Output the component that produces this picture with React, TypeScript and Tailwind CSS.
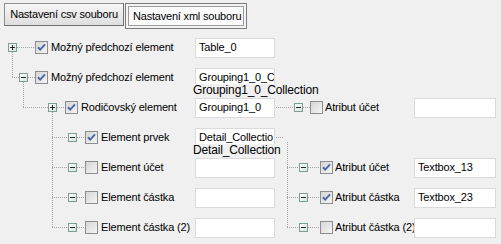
import React from "react";

const FONT = { fontFamily: '"Liberation Sans", Arial, sans-serif' };

function Expander({ open }: { open: boolean }) {
  return (
    <svg width="9" height="9" viewBox="0 0 9 9" className="block shrink-0">
      <defs>
        <linearGradient id="exg" x1="0" y1="0" x2="1" y2="1">
          <stop offset="0" stopColor="#ffffff" />
          <stop offset="1" stopColor="#d6dfdc" />
        </linearGradient>
      </defs>
      <rect x="0.5" y="0.5" width="8" height="8" fill="url(#exg)" stroke="#7a9d94" />
      <line x1="2" y1="4.5" x2="7" y2="4.5" stroke="#1f2a28" />
      {!open && <line x1="4.5" y1="2" x2="4.5" y2="7" stroke="#1f2a28" />}
    </svg>
  );
}

function Check({ checked }: { checked: boolean }) {
  return (
    <svg width="13" height="13" viewBox="0 0 13 13" className="block shrink-0">
      <defs>
        <linearGradient id="cbg" x1="0" y1="0" x2="1" y2="1">
          <stop offset="0" stopColor="#d4d4d4" />
          <stop offset="1" stopColor="#f6f6f6" />
        </linearGradient>
      </defs>
      <rect x="0.5" y="0.5" width="12" height="12" fill="url(#cbg)" stroke="#8c8d8e" />
      {checked && (
        <path d="M3 6.2 L5.2 8.6 L10 3.4" fill="none" stroke="#4a68a8" strokeWidth="2" />
      )}
    </svg>
  );
}

type NodeProps = {
  open: boolean;
  checked: boolean;
  label: string;
  boxMl: string;
  cbMl: string;
  lblMl: string;
};

function Node({ open, checked, label, boxMl, cbMl, lblMl }: NodeProps) {
  return (
    <div className="flex items-start h-[30px]">
      <div className={`${boxMl} mt-[10px]`}>
        <Expander open={open} />
      </div>
      <div className={`${cbMl} mt-[8px]`}>
        <Check checked={checked} />
      </div>
      <span
        className={`${lblMl} mt-[8px] text-[11px] leading-[13px] tracking-[-0.15px] text-black whitespace-nowrap`}
      >
        {label}
      </span>
    </div>
  );
}

function TextBox({ value, w }: { value?: string; w: string }) {
  return (
    <div
      className={`${w} h-[20px] mt-[5px] bg-white border border-[#dadada] text-[11px] leading-[16px] tracking-[-0.15px] pl-[3px] overflow-hidden whitespace-nowrap text-black`}
    >
      {value}
    </div>
  );
}

type Row = {
  left: NodeProps;
  text?: string;
  right?: NodeProps;
  rtext?: string;
};

const rows: Row[] = [
  { left: { open: false, checked: true, label: "Možný předchozí element", boxMl: "ml-[8px]", cbMl: "ml-[18px]", lblMl: "ml-[3px]" }, text: "Table_0" },
  { left: { open: true, checked: true, label: "Možný předchozí element", boxMl: "ml-[19px]", cbMl: "ml-[7px]", lblMl: "ml-[3px]" }, text: "Grouping1_0_C" },
  {
    left: { open: false, checked: true, label: "Rodičovský element", boxMl: "ml-[48px]", cbMl: "ml-[8px]", lblMl: "ml-[3px]" },
    text: "Grouping1_0",
    right: { open: true, checked: false, label: "Atribut účet", boxMl: "ml-[19px]", cbMl: "ml-[7px]", lblMl: "ml-[2px]" },
    rtext: "",
  },
  { left: { open: true, checked: true, label: "Element prvek", boxMl: "ml-[68px]", cbMl: "ml-[8px]", lblMl: "ml-[3px]" }, text: "Detail_Collectio" },
  {
    left: { open: true, checked: false, label: "Element účet", boxMl: "ml-[68px]", cbMl: "ml-[8px]", lblMl: "ml-[3px]" },
    text: "",
    right: { open: true, checked: true, label: "Atribut účet", boxMl: "ml-[24px]", cbMl: "ml-[12px]", lblMl: "ml-[2px]" },
    rtext: "Textbox_13",
  },
  {
    left: { open: true, checked: false, label: "Element částka", boxMl: "ml-[68px]", cbMl: "ml-[8px]", lblMl: "ml-[3px]" },
    text: "",
    right: { open: true, checked: true, label: "Atribut částka", boxMl: "ml-[24px]", cbMl: "ml-[12px]", lblMl: "ml-[2px]" },
    rtext: "Textbox_23",
  },
  {
    left: { open: true, checked: false, label: "Element částka (2)", boxMl: "ml-[68px]", cbMl: "ml-[8px]", lblMl: "ml-[3px]" },
    text: "",
    right: { open: true, checked: false, label: "Atribut částka (2)", boxMl: "ml-[24px]", cbMl: "ml-[12px]", lblMl: "ml-[2px]" },
    rtext: "",
  },
];

function Lines() {
  const d = "1 1";
  const c = "#a3a3a3";
  const L = (x1: number, y1: number, x2: number, y2: number, k: string) => (
    <line key={k} x1={x1} y1={y1} x2={x2} y2={y2} stroke={c} strokeDasharray={d} />
  );
  const items: React.ReactNode[] = [];
  // left tree
  items.push(L(12.5, 52, 12.5, 77, "a"));
  items.push(L(12, 77.5, 19, 77.5, "b"));
  items.push(L(17, 47.5, 35, 47.5, "c"));
  items.push(L(28, 77.5, 35, 77.5, "d"));
  items.push(L(23.5, 82, 23.5, 107, "e"));
  items.push(L(23, 107.5, 48, 107.5, "f"));
  items.push(L(57, 107.5, 65, 107.5, "g"));
  items.push(L(52.5, 112, 52.5, 227, "h"));
  [137.5, 167.5, 197.5, 227.5].forEach((y, i) => {
    items.push(L(52, y, 68, y, "i" + i));
    items.push(L(77, y, 85, y, "j" + i));
  });
  // right tree
  items.push(L(276, 107.5, 294, 107.5, "k"));
  items.push(L(303, 107.5, 310, 107.5, "l"));
  items.push(L(276, 137.5, 283, 137.5, "m"));
  items.push(L(287.5, 142, 287.5, 227, "n"));
  [167.5, 197.5, 227.5].forEach((y, i) => {
    items.push(L(287, y, 299, y, "o" + i));
    items.push(L(308, y, 320, y, "p" + i));
  });
  return (
    <svg className="absolute left-0 top-0 pointer-events-none" width="501" height="244">
      {items}
    </svg>
  );
}

export default function App() {
  return (
    <div className="relative w-[501px] h-[244px] bg-[#f0f0f0] overflow-hidden text-black" style={FONT}>
      {/* tabs */}
      <div className="flex items-start pt-[3px] pl-[4px] h-[33px]">
        <div className="w-[120px] h-[23px] border border-[#8e8e8e] border-r-[#6f6f6f] border-b-[#6f6f6f] bg-gradient-to-b from-[#f7f7f7] to-[#dedede] text-[11px] leading-[21px] text-center whitespace-nowrap tracking-[-0.2px]">
          Nastavení csv souboru
        </div>
        <div className="ml-[1px] w-[122px] h-[26px] border border-[#7b7b7b] p-[2px] bg-[#f4f4f4]">
          <div className="h-full border border-[#9a9a9a] bg-[#fbfbfb] text-[11px] leading-[18px] pl-[4px] whitespace-nowrap overflow-hidden tracking-[-0.2px]">
            Nastavení xml souboru
          </div>
        </div>
      </div>

      {/* tree */}
      <div className="grid grid-cols-[195px_80px_139px_82px]">
        {rows.map((r, i) => (
          <React.Fragment key={i}>
            <Node {...r.left} />
            <div>
              <TextBox value={r.text} w="w-[80px]" />
            </div>
            <div>{r.right ? <Node {...r.right} /> : null}</div>
            <div>{r.right ? <TextBox value={r.rtext ?? ""} w="w-[82px]" /> : null}</div>
          </React.Fragment>
        ))}
      </div>

      <Lines />

      {/* overflow labels */}
      <span className="absolute left-[193px] top-[84px] bg-[#f0f0f0] text-[12px] leading-[13px] tracking-[-0.15px] whitespace-nowrap">
        Grouping1_0_Collection
      </span>
      <span className="absolute left-[193px] top-[144px] bg-[#f0f0f0] text-[12px] leading-[13px] tracking-[-0.15px] whitespace-nowrap">
        Detail_Collection
      </span>
    </div>
  );
}
